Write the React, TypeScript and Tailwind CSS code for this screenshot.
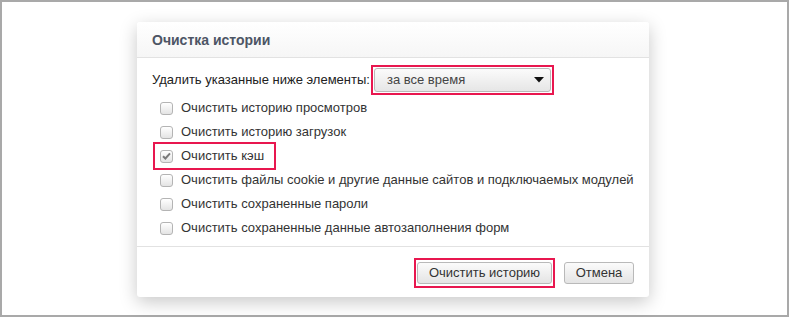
import React from "react";

const items = [
  { label: "Очистить историю просмотров", checked: false },
  { label: "Очистить историю загрузок", checked: false },
  { label: "Очистить кэш", checked: true, marked: true },
  { label: "Очистить файлы cookie и другие данные сайтов и подключаемых модулей", checked: false },
  { label: "Очистить сохраненные пароли", checked: false },
  { label: "Очистить сохраненные данные автозаполнения форм", checked: false },
];

function Box({ checked }: { checked: boolean }) {
  return (
    <span className="w-[13px] h-[13px] shrink-0 rounded-[3px] border border-[#b4b4b4] bg-gradient-to-b from-[#ffffff] to-[#e4e4e4] flex items-center justify-center">
      {checked && (
        <svg width="9" height="8" viewBox="0 0 9 8">
          <path d="M1 4.2 L3.4 6.5 L8 1.3" fill="none" stroke="#7a7a7a" strokeWidth="2" />
        </svg>
      )}
    </span>
  );
}

export default function App() {
  return (
    <div className="w-[790px] h-[318px] bg-white" style={{ fontFamily: '"Liberation Sans", Arial, sans-serif' }}>
      <div className="w-[789px] h-[317px] border-2 border-[#a9a9a9] pl-[135px] pt-[20px]">
        <div className="w-[512px] h-[275px] bg-white rounded-[3px] shadow-[0_5px_18px_rgba(0,0,0,0.22)] flex flex-col">
          <div className="h-[36px] shrink-0 border-b border-[#e2e2e2] bg-gradient-to-b from-[#ffffff] to-[#f6f6f6] rounded-t-[3px] px-[15px] flex items-center">
            <span className="text-[14px] font-bold text-[#4d5565] pt-[1px]">Очистка истории</span>
          </div>

          <div className="flex-1 pt-[10px]">
            <div className="flex items-center pl-[15px] h-[24px]">
              <span className="text-[13px] text-[#222]">Удалить указанные ниже элементы:</span>
              <div className="ml-[1px] -my-[3px] border-2 border-[#e8174f] p-[1px]">
                <div className="w-[177px] h-[24px] rounded-[3px] border border-[#b9b9b9] bg-gradient-to-b from-[#fbfbfb] to-[#e6e6e6] flex items-center justify-between pl-[12px] pr-[6px]">
                  <span className="text-[13px] text-[#444]">за все время</span>
                  <svg width="10" height="6" viewBox="0 0 10 6">
                    <path d="M0 0 H10 L5 5.5 Z" fill="#111" />
                  </svg>
                </div>
              </div>
            </div>

            <div className="mt-[4px] flex flex-col">
              {items.map((it) => (
                <div key={it.label} className="h-[24px] flex items-center pl-[23px]">
                  {it.marked ? (
                    <div className="-ml-[7px] h-[28px] flex items-center gap-[8px] border-2 border-[#e8174f] pl-[5px] pr-[10px]">
                      <Box checked={it.checked} />
                      <span className="text-[13px] text-[#333]">{it.label}</span>
                    </div>
                  ) : (
                    <div className="flex items-center gap-[8px]">
                      <Box checked={it.checked} />
                      <span className="text-[13px] text-[#333]">{it.label}</span>
                    </div>
                  )}
                </div>
              ))}
            </div>
          </div>

          <div className="h-[51px] shrink-0 border-t border-[#e2e2e2] flex items-start justify-end gap-[12px] pt-[15px] pr-[15px]">
            <div className="-mx-[3px] -my-[4px] border-2 border-[#e8174f] px-[1px] py-[2px]">
              <button className="block w-[135px] h-[22px] rounded-[3px] border border-[#b9b9b9] bg-gradient-to-b from-[#fbfbfb] to-[#e4e4e4] text-[13px] text-[#333]">
                Очистить историю
              </button>
            </div>
            <button className="w-[70px] h-[22px] rounded-[3px] border border-[#b9b9b9] bg-gradient-to-b from-[#fbfbfb] to-[#e4e4e4] text-[13px] text-[#333]">
              Отмена
            </button>
          </div>
        </div>
      </div>
    </div>
  );
}
